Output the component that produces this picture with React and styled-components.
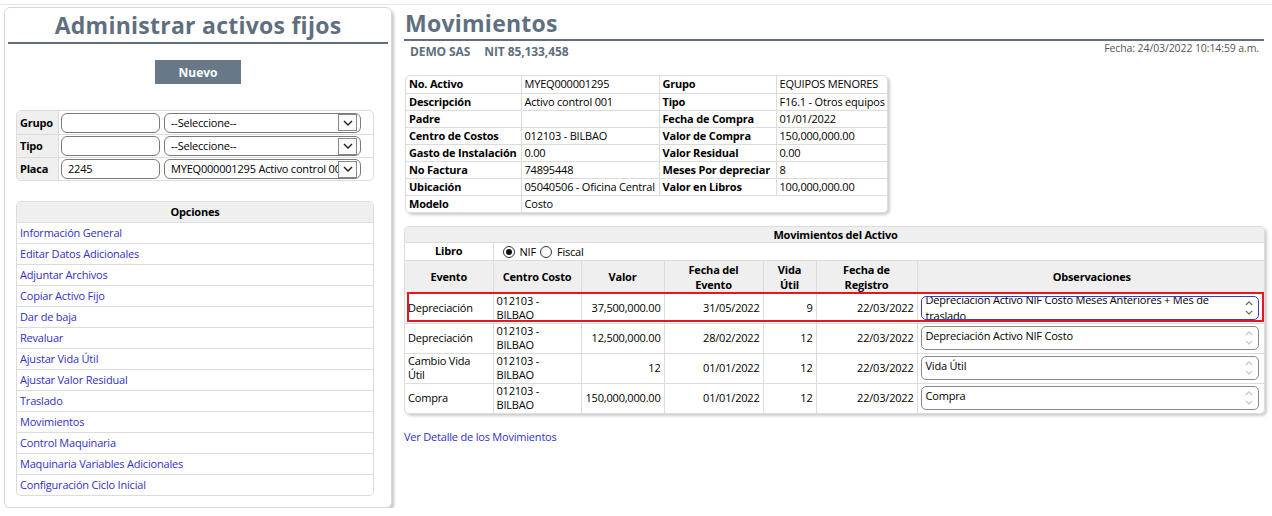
import React from "react";
import styled, { createGlobalStyle } from "styled-components";

const GlobalStyle = createGlobalStyle`
  html, body { margin: 0; padding: 0; background: #fff; }
  body {
    font-family: "Open Sans", "Noto Sans", sans-serif;
    font-size: 11px;
    letter-spacing: -0.2px;
    line-height: 1.27;
    color: #000;
  }
  * { box-sizing: border-box; }
`;

const SLATE = "#5f6f7f";
const LINK = "#3030c8";
const GRID = "#dcdcdc";

const Page = styled.div`
  margin-top: 4px;
  border-top: 1px solid #e9e9e9;
  padding: 2px 7px 0 4px;
  display: flex;
  align-items: flex-start;
  gap: 12px;
`;

const SidePanel = styled.aside`
  width: 388px;
  flex: none;
  border: 1px solid #d8d8d8;
  border-radius: 6px;
  box-shadow: 2px 3px 3px rgba(0, 0, 0, 0.22);
  padding: 0 3px 11px 3px;
  display: flex;
  flex-direction: column;
`;

const PanelTitle = styled.h1`
  margin: 0;
  font-size: 23px;
  line-height: 34px;
  font-weight: 700;
  color: ${SLATE};
  text-align: center;
  border-bottom: 2px solid ${SLATE};
  letter-spacing: 0.25px;
`;

const NewButton = styled.button`
  align-self: center;
  margin-top: 16px;
  width: 86px;
  height: 24px;
  border: none;
  background: #687888;
  color: #fff;
  font-family: inherit;
  font-weight: 700;
  font-size: 12px;
  letter-spacing: 0;
  padding: 0;
`;

const Grid = styled.table`
  border-collapse: separate;
  border-spacing: 0;
  border: 1px solid ${GRID};
  border-radius: 5px;
  overflow: hidden;
  margin: ${(p) => p.$mt || 0}px 0 0 8px;
  width: 358px;
  table-layout: fixed;
`;

const FilterLabel = styled.th`
  background: #efefef;
  font-weight: 700;
  text-align: left;
  padding: 0 3px;
  height: 23px;
  border-right: 1px solid ${GRID};
  border-top: ${(p) => (p.$first ? "none" : `1px solid ${GRID}`)};
`;

const FilterCell = styled.td`
  padding: 0 ${(p) => (p.$wide ? 12 : 2)}px 0 2px;
  border-top: ${(p) => (p.$first ? "none" : `1px solid ${GRID}`)};
`;

const TextBox = styled.div`
  height: 20px;
  border: 1px solid #7a7a7a;
  border-radius: 6px;
  padding: 0 6px;
  line-height: 18px;
  white-space: nowrap;
  overflow: hidden;
`;

const SelectBox = styled.div`
  height: 20px;
  border: 1px solid #7a7a7a;
  border-radius: 6px;
  display: flex;
  align-items: center;
  padding-left: 6px;
  padding-right: 3px;
`;

const SelectText = styled.span`
  flex: 1;
  white-space: nowrap;
  overflow: hidden;
  line-height: 18px;
`;

const ArrowBox = styled.span`
  width: 19px;
  height: 17px;
  border: 1px solid #888;
  background: #fafafa;
  display: flex;
  align-items: center;
  justify-content: center;
  flex: none;
`;

const OptHead = styled.th`
  background: #efefef;
  font-weight: 700;
  text-align: center;
  height: 20px;
  padding: 0;
`;

const OptCell = styled.td`
  height: 21px;
  padding: 0 3px;
  border-top: 1px solid ${GRID};
`;

const Link = styled.a`
  color: ${LINK};
  text-decoration: none;
  cursor: pointer;
`;

const Main = styled.main`
  flex: 1;
  min-width: 0;
  display: flex;
  flex-direction: column;
`;

const MainTitle = styled.h1`
  margin: 0 1px 0 0;
  padding-left: 1px;
  font-size: 23px;
  line-height: 32px;
  font-weight: 700;
  letter-spacing: 0.25px;
  color: ${SLATE};
  border-bottom: 2px solid ${SLATE};
`;

const SubBar = styled.div`
  display: flex;
  justify-content: space-between;
  align-items: flex-start;
  height: 19px;
`;

const Company = styled.div`
  padding: 3px 0 0 6px;
  display: flex;
  gap: 14px;
  font-weight: 700;
  font-size: 12px;
  letter-spacing: -0.1px;
  color: ${SLATE};
`;

const DateText = styled.div`
  padding: 1px 6px 0 0;
  font-size: 10.5px;
  letter-spacing: -0.1px;
  color: #555;
`;

const Card = styled.div`
  position: relative;
  border: 1px solid ${GRID};
  border-radius: 5px;
  box-shadow: 2px 2px 3px rgba(0, 0, 0, 0.2);
  overflow: hidden;
  margin-top: ${(p) => p.$mt}px;
  margin-left: ${(p) => p.$ml || 0}px;
  width: ${(p) => p.$w}px;
`;

const DataTable = styled.table`
  border-collapse: collapse;
  width: 100%;
  table-layout: fixed;
`;

const InfoLabel = styled.th`
  font-weight: 700;
  text-align: left;
  height: 17px;
  padding: 0 3px;
  border: 1px solid ${GRID};
  border-top-width: ${(p) => (p.$first ? 0 : 1)}px;
  border-bottom-width: ${(p) => (p.$last ? 0 : 1)}px;
  border-left-width: ${(p) => (p.$edge ? 0 : 1)}px;
  white-space: nowrap;
`;

const InfoValue = styled.td`
  height: 17px;
  padding: 0 3px;
  border: 1px solid ${GRID};
  border-top-width: ${(p) => (p.$first ? 0 : 1)}px;
  border-bottom-width: ${(p) => (p.$last ? 0 : 1)}px;
  border-right-width: ${(p) => (p.$edge ? 0 : 1)}px;
  white-space: nowrap;
  overflow: hidden;
`;

const CaptionCell = styled.th`
  background: #efefef;
  font-weight: 700;
  text-align: center;
  height: 15px;
  line-height: 13px;
  padding: 0;
  border-bottom: 1px solid ${GRID};
`;

const LibroLabel = styled.th`
  font-weight: 700;
  text-align: center;
  height: 18px;
  line-height: 14px;
  padding: 0;
  border-right: 1px solid ${GRID};
`;

const RadioGroup = styled.td`
  padding: 0 0 0 9px;
  height: 18px;
  line-height: 14px;
`;

const RadioItem = styled.label`
  display: inline-flex;
  align-items: center;
  gap: 5px;
  margin-right: 4px;
  vertical-align: middle;
`;

const RadioDot = styled.span`
  width: 12px;
  height: 12px;
  border-radius: 50%;
  border: 1px solid #333;
  display: inline-flex;
  align-items: center;
  justify-content: center;
  &::after {
    content: "";
    width: 6px;
    height: 6px;
    border-radius: 50%;
    background: ${(p) => (p.$on ? "#111" : "transparent")};
  }
`;

const ColHead = styled.th`
  background: #efefef;
  font-weight: 700;
  text-align: center;
  height: 33px;
  padding: 0 2px;
  line-height: 15px;
  border: 1px solid ${GRID};
  border-left-width: ${(p) => (p.$edge ? 0 : 1)}px;
  border-right-width: ${(p) => (p.$last ? 0 : 1)}px;
`;

const Cell = styled.td`
  height: 30px;
  padding: 0 3px;
  line-height: 14px;
  text-align: ${(p) => (p.$right ? "right" : "left")};
  border: 1px solid ${GRID};
  border-left-width: ${(p) => (p.$edge ? 0 : 1)}px;
  border-right-width: ${(p) => (p.$last ? 0 : 1)}px;
  border-bottom-width: ${(p) => (p.$bottom ? 0 : 1)}px;
`;

const NoteBox = styled.div`
  height: 24px;
  width: 338px;
  border: 1px solid ${(p) => (p.$focus ? "#3a3ad0" : "#8a8a8a")};
  border-radius: 5px;
  display: flex;
  overflow: hidden;
`;

const NoteText = styled.div`
  flex: 1;
  padding: 0 ${(p) => (p.$focus ? 30 : 4)}px 0 4px;
  line-height: ${(p) => (p.$focus ? 16 : 15)}px;
  margin-top: ${(p) => (p.$focus ? -5 : 1)}px;
`;

const Scroller = styled.div`
  width: 14px;
  display: flex;
  flex-direction: column;
  align-items: center;
  justify-content: center;
  gap: 4px;
  margin-right: 2px;
`;

const Highlight = styled.div`
  position: absolute;
  left: 2px;
  top: 65px;
  width: 857px;
  height: 30px;
  border: 2px solid #e8161b;
  pointer-events: none;
`;

const DetailLink = styled(Link)`
  margin-top: 16px;
  align-self: flex-start;
`;

const Chevron = ({ dir = "down", color = "#222", size = 10 }) => (
  <svg width={size} height={size * 0.6} viewBox="0 0 10 6">
    <path
      d={dir === "down" ? "M1 1 L5 5 L9 1" : "M1 5 L5 1 L9 5"}
      fill="none"
      stroke={color}
      strokeWidth="1.4"
    />
  </svg>
);

const Select = ({ value }) => (
  <SelectBox>
    <SelectText>{value}</SelectText>
    <ArrowBox>
      <Chevron />
    </ArrowBox>
  </SelectBox>
);

const filters = [
  ["Grupo", "", "--Seleccione--"],
  ["Tipo", "", "--Seleccione--"],
  ["Placa", "2245", "MYEQ000001295 Activo control 001"],
];

const options = [
  "Información General",
  "Editar Datos Adicionales",
  "Adjuntar Archivos",
  "Copiar Activo Fijo",
  "Dar de baja",
  "Revaluar",
  "Ajustar Vida Útil",
  "Ajustar Valor Residual",
  "Traslado",
  "Movimientos",
  "Control Maquinaria",
  "Maquinaria Variables Adicionales",
  "Configuración Ciclo Inicial",
];

const info = [
  ["No. Activo", "MYEQ000001295", "Grupo", "EQUIPOS MENORES"],
  ["Descripción", "Activo control 001", "Tipo", "F16.1 - Otros equipos"],
  ["Padre", "", "Fecha de Compra", "01/01/2022"],
  ["Centro de Costos", "012103 - BILBAO", "Valor de Compra", "150,000,000.00"],
  ["Gasto de Instalación", "0.00", "Valor Residual", "0.00"],
  ["No Factura", "74895448", "Meses Por depreciar", "8"],
  ["Ubicación", "05040506 - Oficina Central", "Valor en Libros", "100,000,000.00"],
];

const movements = [
  ["Depreciación", "012103 - BILBAO", "37,500,000.00", "31/05/2022", "9", "22/03/2022", "Depreciacion Activo NIF Costo Meses Anteriores + Mes de traslado", true],
  ["Depreciación", "012103 - BILBAO", "12,500,000.00", "28/02/2022", "12", "22/03/2022", "Depreciación Activo NIF Costo", false],
  ["Cambio Vida Útil", "012103 - BILBAO", "12", "01/01/2022", "12", "22/03/2022", "Vida Útil", false],
  ["Compra", "012103 - BILBAO", "150,000,000.00", "01/01/2022", "12", "22/03/2022", "Compra", false],
];

const colWidths = [88, 88, 83, 99, 53, 101, 349];

export default function App() {
  return (
    <>
      <GlobalStyle />
      <Page>
        <SidePanel>
          <PanelTitle>Administrar activos fijos</PanelTitle>
          <NewButton>Nuevo</NewButton>

          <Grid $mt={26}>
            <colgroup>
              <col style={{ width: 42 }} />
              <col style={{ width: 103 }} />
              <col />
            </colgroup>
            <tbody>
              {filters.map(([label, val, sel], i) => (
                <tr key={label}>
                  <FilterLabel $first={i === 0}>{label}</FilterLabel>
                  <FilterCell $first={i === 0}>
                    <TextBox>{val}</TextBox>
                  </FilterCell>
                  <FilterCell $first={i === 0} $wide>
                    <Select value={sel} />
                  </FilterCell>
                </tr>
              ))}
            </tbody>
          </Grid>

          <Grid $mt={20}>
            <thead>
              <tr>
                <OptHead>Opciones</OptHead>
              </tr>
            </thead>
            <tbody>
              {options.map((o) => (
                <tr key={o}>
                  <OptCell>
                    <Link>{o}</Link>
                  </OptCell>
                </tr>
              ))}
            </tbody>
          </Grid>
        </SidePanel>

        <Main>
          <MainTitle>Movimientos</MainTitle>
          <SubBar>
            <Company>
              <span>DEMO SAS</span>
              <span>NIT 85,133,458</span>
            </Company>
            <DateText>Fecha: 24/03/2022 10:14:59 a.m.</DateText>
          </SubBar>

          <Card $mt={15} $ml={1} $w={483}>
            <DataTable>
              <colgroup>
                <col style={{ width: 115 }} />
                <col style={{ width: 138 }} />
                <col style={{ width: 117 }} />
                <col />
              </colgroup>
              <tbody>
                {info.map(([a, b, c, d], i) => (
                  <tr key={a}>
                    <InfoLabel $first={i === 0} $edge>{a}</InfoLabel>
                    <InfoValue $first={i === 0}>{b}</InfoValue>
                    <InfoLabel $first={i === 0}>{c}</InfoLabel>
                    <InfoValue $first={i === 0} $edge>{d}</InfoValue>
                  </tr>
                ))}
                <tr>
                  <InfoLabel $edge $last>Modelo</InfoLabel>
                  <InfoValue colSpan={3} $edge $last>Costo</InfoValue>
                </tr>
              </tbody>
            </DataTable>
          </Card>

          <Card $mt={13} $w={861}>
            <DataTable>
              <colgroup>
                {colWidths.map((w, i) => (
                  <col key={i} style={{ width: w }} />
                ))}
              </colgroup>
              <thead>
                <tr>
                  <CaptionCell colSpan={7}>Movimientos del Activo</CaptionCell>
                </tr>
                <tr>
                  <LibroLabel>Libro</LibroLabel>
                  <RadioGroup colSpan={6}>
                    <RadioItem>
                      <RadioDot $on /> NIF
                    </RadioItem>
                    <RadioItem>
                      <RadioDot /> Fiscal
                    </RadioItem>
                  </RadioGroup>
                </tr>
                <tr>
                  <ColHead $edge>Evento</ColHead>
                  <ColHead>Centro Costo</ColHead>
                  <ColHead>Valor</ColHead>
                  <ColHead>Fecha del<br />Evento</ColHead>
                  <ColHead>Vida<br />Útil</ColHead>
                  <ColHead>Fecha de<br />Registro</ColHead>
                  <ColHead $last>Observaciones</ColHead>
                </tr>
              </thead>
              <tbody>
                {movements.map((m, i) => {
                  const bottom = i === movements.length - 1;
                  const focus = m[7];
                  return (
                    <tr key={i}>
                      <Cell $edge $bottom={bottom}>{m[0]}</Cell>
                      <Cell $bottom={bottom}>{m[1]}</Cell>
                      <Cell $right $bottom={bottom}>{m[2]}</Cell>
                      <Cell $right $bottom={bottom}>{m[3]}</Cell>
                      <Cell $right $bottom={bottom}>{m[4]}</Cell>
                      <Cell $right $bottom={bottom}>{m[5]}</Cell>
                      <Cell $last $bottom={bottom}>
                        <NoteBox $focus={focus}>
                          <NoteText $focus={focus}>{m[6]}</NoteText>
                          <Scroller>
                            <Chevron dir="up" size={8} color={focus ? "#666" : "#c4c4c4"} />
                            <Chevron dir="down" size={8} color={focus ? "#666" : "#c4c4c4"} />
                          </Scroller>
                        </NoteBox>
                      </Cell>
                    </tr>
                  );
                })}
              </tbody>
            </DataTable>
            <Highlight />
          </Card>

          <DetailLink>Ver Detalle de los Movimientos</DetailLink>
        </Main>
      </Page>
    </>
  );
}
